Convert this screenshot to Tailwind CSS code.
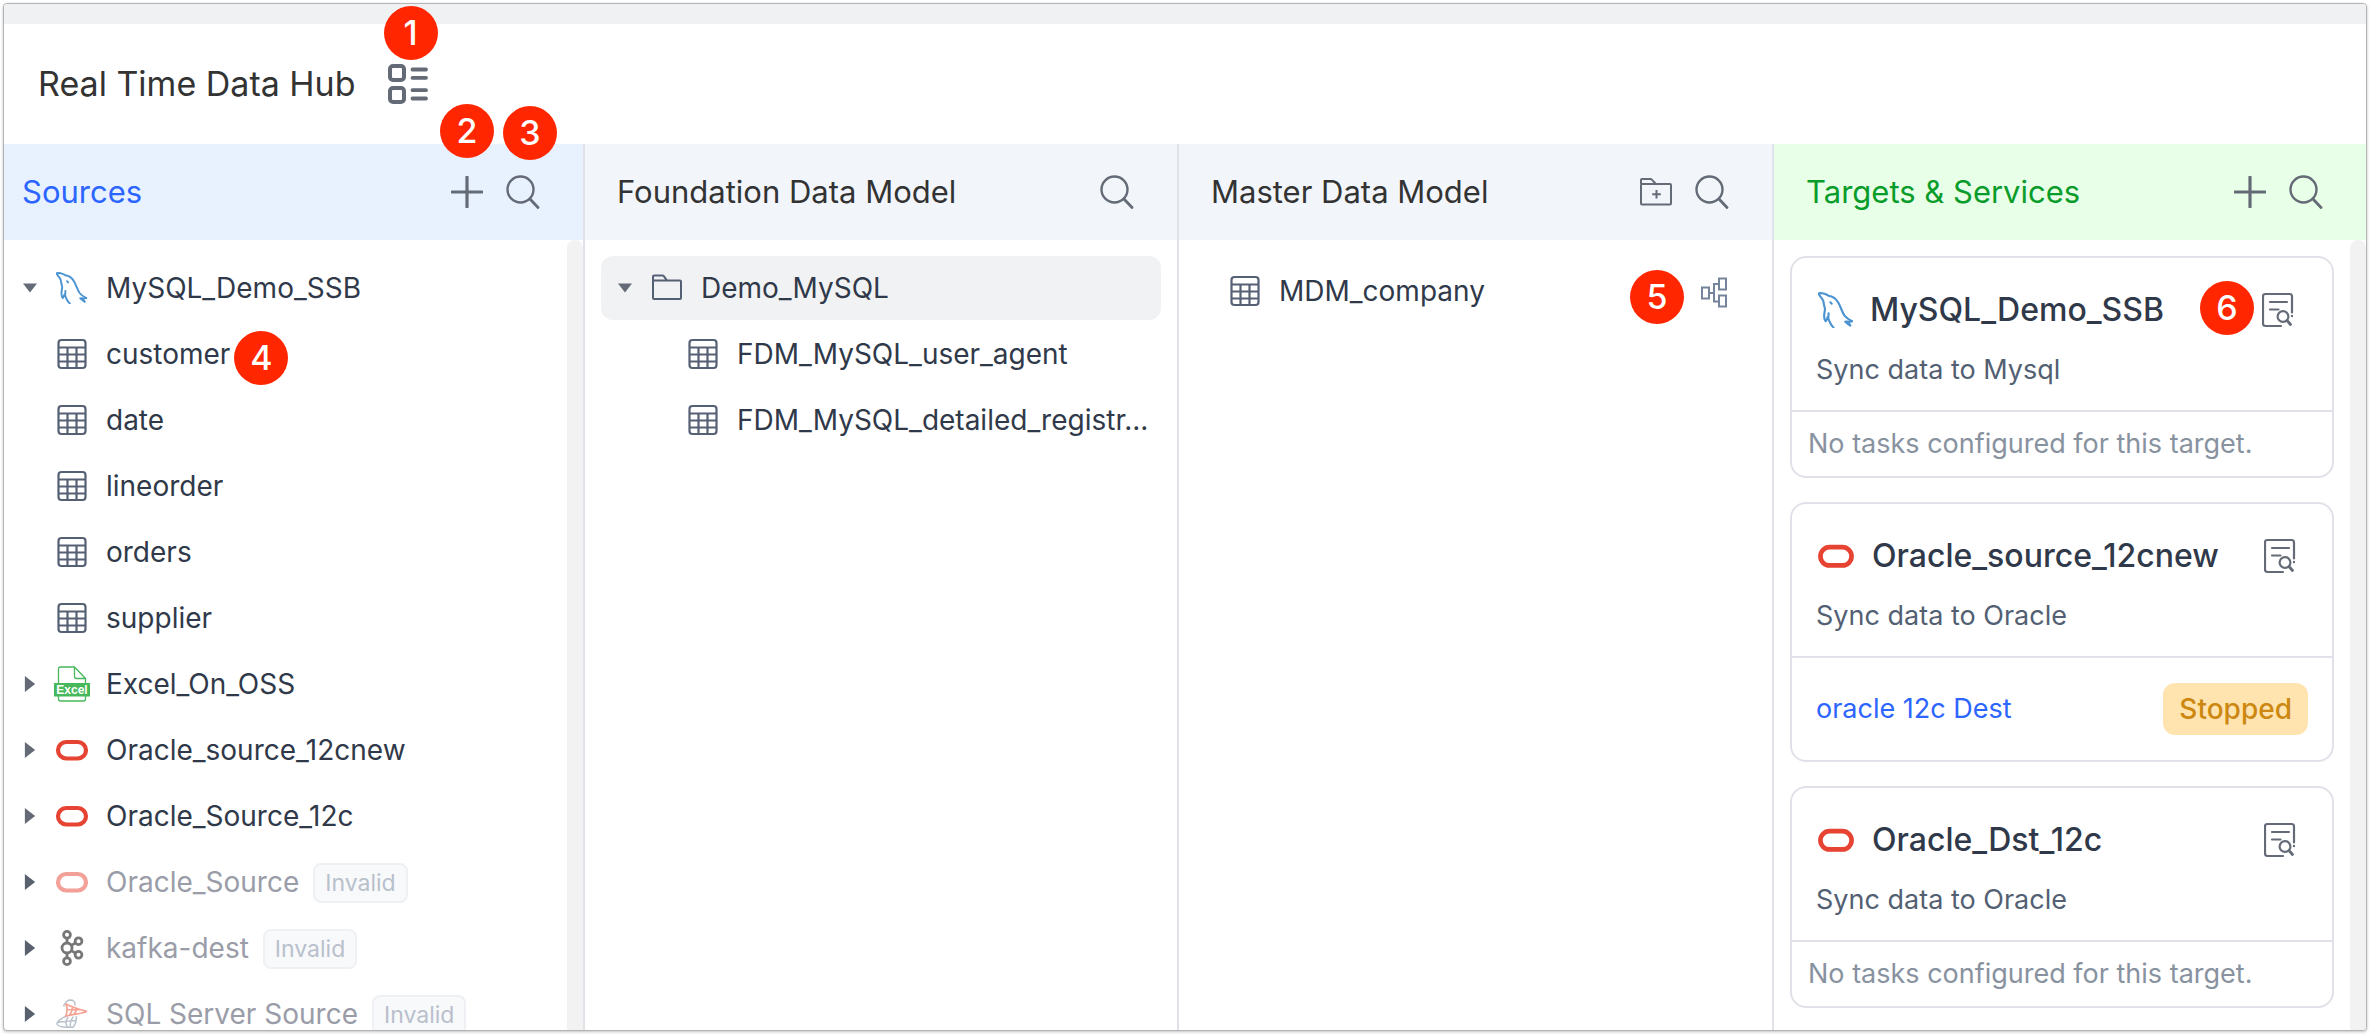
<!DOCTYPE html>
<html lang="en">
<head>
<meta charset="utf-8">
<meta name="viewport" content="width=device-width, initial-scale=1">
<title>Real Time Data Hub</title>
<script src="https://cdn.jsdelivr.net/npm/@tailwindcss/browser@4"></script>
</head>
<body class="bg-white font-['Inter','Liberation_Sans',sans-serif] text-[28px] leading-10 text-[#303949]">

<svg class="hidden" aria-hidden="true">
  <symbol id="i-plus" viewBox="0 0 32 32"><path d="M16 1v30M1 16h30" fill="none" stroke="currentColor" stroke-width="3.200" stroke-linecap="round"/></symbol>
  <symbol id="i-search" viewBox="0 0 34 34"><g fill="none" stroke="currentColor" stroke-width="2.400" stroke-linecap="round"><circle cx="14.500" cy="14.500" r="13"/><path d="M24 24l8 8.500" stroke-width="2.800"/></g></symbol>
  <symbol id="i-folder" viewBox="0 0 32 32"><path d="M2 9.500V4.500q0-1 1-1h8.500q.8 0 1.300.6L16 8.500M3 8.500h26q1 0 1 1V26q0 1-1 1H3q-1 0-1-1V9.500q0-1 1-1z" fill="none" stroke="currentColor" stroke-width="2" stroke-linejoin="round"/></symbol>
  <symbol id="i-folder-add" viewBox="0 0 34 30"><path d="M2 7V3q0-1 1-1h8.500q.8 0 1.300.6L16.500 6.500M3 7h28q1 0 1 1v18.500q0 1-1 1H3q-1 0-1-1V8q0-1 1-1zM17.500 13v8.500M13.200 17.200h8.600" fill="none" stroke="currentColor" stroke-width="2" stroke-linejoin="round"/></symbol>
  <symbol id="i-table" viewBox="0 0 32 32"><path d="M5.500 2h21q3 0 3 3v22q0 3-3 3h-21q-3 0-3-3V5q0-3 3-3zM2.500 9.500h27M2.500 16.500h27M2.500 23.500h27M11.500 9.500V30M20.500 9.500V30" fill="none" stroke="currentColor" stroke-width="2.200"/></symbol>
  <symbol id="i-down" viewBox="0 0 14 10"><path d="M0 .5h14L7 9.500z" fill="currentColor"/></symbol>
  <symbol id="i-right" viewBox="0 0 10 14"><path d="M.5 0v14L9.500 7z" fill="currentColor"/></symbol>
  <symbol id="i-mysql" viewBox="0 0 32 32"><g fill="none" stroke="#4b93d1" stroke-width="1.900" stroke-linecap="round" stroke-linejoin="round"><path d="M.9 1.900C.4.700 2 .8 5 1.300c2 .5 3 .8 4.300 2 3.500.4 7 3 8.800 6.200 2.200 3.800 3.200 8.200 5.500 11.500 1.500 1.900 3.500 3.300 6.600 5"/><path d="M.9 1.900c1 2.600 3 3.600 3.800 6 .6 2.600.5 4 1.300 6 .7 2.200-.7 4.600-.5 7.500 0 2.400.8 4.200 1.300 4.600 1-1 1.300-2.600 2-4 .8 3.400 2.200 7 5 9.500M9.200 22c.4-1.400 0-2 .2-3"/><path d="M30.200 26c-1.600.4-3.200.6-4.600.3 1.600 1.200 2.800 2.200 3.200 3.600-1.600-1-3-2.200-4.600-3.600"/><path d="M11 9.200l1.200 1.200"/></g></symbol>
  <symbol id="i-oracle" viewBox="0 0 36 36"><rect x="4" y="10" width="28" height="16.500" rx="8.200" fill="none" stroke="#e64333" stroke-width="4.200"/></symbol>
  <symbol id="i-kafka" viewBox="0 0 36 36"><g fill="none" stroke="#777" stroke-width="2.800"><circle cx="13" cy="4.800" r="3.400"/><circle cx="13" cy="18" r="5"/><circle cx="13" cy="31.200" r="3.400"/><circle cx="24.500" cy="11.200" r="3.400"/><circle cx="24.500" cy="24.800" r="3.400"/><path d="M13 8.200V13M13 23v4.800M17.300 15.400l4.200-2.500M17.300 20.600l4.200 2.500"/></g></symbol>
  <symbol id="i-sqlserver" viewBox="0 0 36 36"><g fill="none" stroke="#b9c2cc" stroke-width="1.500" stroke-linecap="round" stroke-linejoin="round"><path d="M11.500 7.500c.5-2 2.500-3.500 5-3.600 3 0 4.500 1.600 4.600 5M10 10c-.3-1 .3-2 1.500-2.500M12 20.500C7 22 3 25.500 3 28c.4 2.600 8.500 3.600 16 3.200 2.500-2.600 3.500-6 3.300-10.700M3.500 26.500c4.500-1 11-1.800 18.500-2M14 21.500c-2.500 3-2.500 6.500-.5 9.400M19 21c-2.500 3-3 7-2.500 10"/></g><g fill="none" stroke="#f7a394" stroke-width="1.700" stroke-linejoin="round"><path d="M12 8c3.500 2.200 10.500 4.600 20.500 7.400-4 2-12 2.600-20.800 4.800 1.600-3.600 2-7.600.3-12.200zM13.500 13.500c5 .2 9 .3 13 .2M18 10.500c.6 3-.5 6-2.500 8.500M22.500 12c0 2.500-1 4.500-2.500 6"/></g></symbol>
  <symbol id="i-doc" viewBox="0 0 32 36"><g fill="none" stroke="currentColor" stroke-width="2.200" stroke-linecap="round"><path d="M30 20.500V4.500Q30 2 27.500 2h-24Q1 2 1 4.500v27Q1 34 3.500 34H19M8 10h17M8 17.500h8.500M30 23.800v.4"/><circle cx="21" cy="24.500" r="5.400"/><path d="M25 28.500l3.500 4" stroke-width="2.800"/></g></symbol>
  <symbol id="i-lineage" viewBox="0 0 28 32"><path d="M2 10.500h7v11H2zM19 1.500h7v11h-7zM19 18.500h7v11h-7zM9 16h5M19 7h-5v17.500h5" fill="none" stroke="currentColor" stroke-width="2"/></symbol>
  <symbol id="i-view" viewBox="0 0 40 40"><g fill="none" stroke="currentColor" stroke-linecap="round"><rect x="2" y="2" width="14" height="14" rx="3" stroke-width="4"/><rect x="2" y="24" width="14" height="14" rx="3" stroke-width="4"/><path d="M24.500 5.500h13.500M24.500 13.800h13.500M24.500 26.200h13.500M24.500 34.500h13.500" stroke-width="3.800"/></g></symbol>
  <symbol id="i-excel" viewBox="0 0 36 36"><g fill="none" stroke="#48b85c" stroke-width="1.300" stroke-linejoin="round"><path d="M4.500 17V3q0-2 2-2h14L31.500 12.500V17M20.500 1v9.500q0 2 2 2h9M4.500 30v3q0 2 2 2h23q2 0 2-2v-3"/></g><path d="M0 17h36v13.500H0z" fill="#48b85c"/><text x="18" y="27.500" text-anchor="middle" font-family="Liberation Sans, sans-serif" font-weight="bold" font-size="12" fill="#fff">Excel</text></symbol>
</svg>

<div class="h-screen p-[3px]">
<div class="flex h-full flex-col overflow-hidden rounded-sm border border-[#b4b4b4] bg-white shadow-[0_1px_3px_rgba(0,0,0,0.25)]">
  <div class="h-5 shrink-0 bg-[#f0f1f3]"></div>
  <header class="flex h-[120px] shrink-0 items-center gap-8 pl-[34px]">
    <h1 class="text-[34px] leading-[48px] text-[#333]">Real Time Data Hub</h1>
    <button class="relative text-[#646b76]" aria-label="Switch view">
      <svg class="size-10"><use href="#i-view"/></svg>
      <span class="absolute -top-[58px] -left-1 flex size-[54px] items-center justify-center rounded-full bg-[#ff2600] text-[34px] font-medium text-white">1</span>
    </button>
  </header>

  <main class="grid min-h-0 flex-1 grid-cols-[581fr_594fr_595fr_592fr]">
    <section class="flex min-h-0 min-w-0 flex-col border-r-2 border-[#e1e2e9]">
      <div class="flex h-24 shrink-0 items-center justify-between bg-[#e8f2ff] pr-10 pl-[18px]">
        <h2 class="text-[31px] text-[#2c65ff]">Sources</h2>
        <div class="flex gap-4 text-[#646b76]">
          <button class="relative flex size-10 items-center justify-center" aria-label="Add source"><svg class="size-8"><use href="#i-plus"/></svg>
            <span class="absolute -top-[68px] -left-[7px] flex size-[54px] items-center justify-center rounded-full bg-[#ff2600] text-[34px] font-medium text-white">2</span></button>
          <button class="relative flex size-10 items-center justify-center" aria-label="Search sources"><svg class="size-[34px]"><use href="#i-search"/></svg>
            <span class="absolute -top-[66px] left-0 flex size-[54px] items-center justify-center rounded-full bg-[#ff2600] text-[34px] font-medium text-white">3</span></button>
        </div>
      </div>
      <div class="flex min-h-0 flex-1">
        <ul class="flex min-w-0 flex-1 flex-col gap-0.5 overflow-hidden pt-4">
          <li class="flex h-16 shrink-0 items-center pl-[10px]"><button class="mr-2 flex w-8 justify-center text-[#646b76]" aria-label="Collapse"><svg class="h-[10px] w-[14px]"><use href="#i-down"/></svg></button><span class="mr-4 flex size-9 items-center justify-center"><svg class="size-8"><use href="#i-mysql"/></svg></span>MySQL_Demo_SSB</li>
          <li class="flex h-16 shrink-0 items-center gap-[18px] pl-[52px]"><svg class="size-8 text-[#566074]"><use href="#i-table"/></svg><span>customer</span><span class="mt-2 -ml-[14px] flex size-[54px] items-center justify-center rounded-full bg-[#ff2600] text-[34px] font-medium text-white">4</span></li>
          <li class="flex h-16 shrink-0 items-center gap-[18px] pl-[52px]"><svg class="size-8 text-[#566074]"><use href="#i-table"/></svg>date</li>
          <li class="flex h-16 shrink-0 items-center gap-[18px] pl-[52px]"><svg class="size-8 text-[#566074]"><use href="#i-table"/></svg>lineorder</li>
          <li class="flex h-16 shrink-0 items-center gap-[18px] pl-[52px]"><svg class="size-8 text-[#566074]"><use href="#i-table"/></svg>orders</li>
          <li class="flex h-16 shrink-0 items-center gap-[18px] pl-[52px]"><svg class="size-8 text-[#566074]"><use href="#i-table"/></svg>supplier</li>
          <li class="flex h-16 shrink-0 items-center pl-[10px]"><button class="mr-2 flex w-8 justify-center text-[#646b76]" aria-label="Expand"><svg class="h-4 w-3"><use href="#i-right"/></svg></button><svg class="mr-4 size-9"><use href="#i-excel"/></svg>Excel_On_OSS</li>
          <li class="flex h-16 shrink-0 items-center pl-[10px]"><button class="mr-2 flex w-8 justify-center text-[#646b76]" aria-label="Expand"><svg class="h-4 w-3"><use href="#i-right"/></svg></button><svg class="mr-4 size-9"><use href="#i-oracle"/></svg>Oracle_source_12cnew</li>
          <li class="flex h-16 shrink-0 items-center pl-[10px]"><button class="mr-2 flex w-8 justify-center text-[#646b76]" aria-label="Expand"><svg class="h-4 w-3"><use href="#i-right"/></svg></button><svg class="mr-4 size-9"><use href="#i-oracle"/></svg>Oracle_Source_12c</li>
          <li class="flex h-16 shrink-0 items-center pl-[10px] text-[#9a9da8]"><button class="mr-2 flex w-8 justify-center text-[#59616e]" aria-label="Expand"><svg class="h-4 w-3"><use href="#i-right"/></svg></button><svg class="mr-4 size-9 opacity-50"><use href="#i-oracle"/></svg>Oracle_Source<span class="mt-0.5 ml-[14px] flex h-10 items-center rounded-lg border-2 border-[#eff0f3] bg-[#f8f9fb] px-[10px] text-[23px] text-[#b8c0cc]">Invalid</span></li>
          <li class="flex h-16 shrink-0 items-center pl-[10px] text-[#9a9da8]"><button class="mr-2 flex w-8 justify-center text-[#59616e]" aria-label="Expand"><svg class="h-4 w-3"><use href="#i-right"/></svg></button><svg class="mr-4 size-9"><use href="#i-kafka"/></svg>kafka-dest<span class="mt-0.5 ml-[14px] flex h-10 items-center rounded-lg border-2 border-[#eff0f3] bg-[#f8f9fb] px-[10px] text-[23px] text-[#b8c0cc]">Invalid</span></li>
          <li class="flex h-16 shrink-0 items-center pl-[10px] text-[#9a9da8]"><button class="mr-2 flex w-8 justify-center text-[#59616e]" aria-label="Expand"><svg class="h-4 w-3"><use href="#i-right"/></svg></button><svg class="mr-4 size-9"><use href="#i-sqlserver"/></svg>SQL Server Source<span class="mt-0.5 ml-[14px] flex h-10 items-center rounded-lg border-2 border-[#eff0f3] bg-[#f8f9fb] px-[10px] text-[23px] text-[#b8c0cc]">Invalid</span></li>
        </ul>
        <div class="w-4 rounded-t-full bg-[#f2f2f2]"></div>
      </div>
    </section>

    <section class="flex min-h-0 min-w-0 flex-col border-r-2 border-[#e1e2e9]">
      <div class="flex h-24 shrink-0 items-center justify-between bg-[#f2f6fb] pr-10 pl-8">
        <h2 class="text-[31px] text-[#333]">Foundation Data Model</h2>
        <button class="flex size-10 items-center justify-center text-[#646b76]" aria-label="Search foundation data model"><svg class="size-[34px]"><use href="#i-search"/></svg></button>
      </div>
      <ul class="flex flex-col gap-0.5 p-4">
        <li class="flex h-16 items-center rounded-xl bg-[#f1f2f4] pl-2"><button class="mr-[10px] flex w-8 justify-center text-[#646b76]" aria-label="Collapse"><svg class="h-[10px] w-[14px]"><use href="#i-down"/></svg></button><svg class="mr-[18px] size-8 text-[#566074]"><use href="#i-folder"/></svg>Demo_MySQL</li>
        <li class="flex h-16 items-center gap-[18px] pr-1 pl-[86px]"><svg class="size-8 shrink-0 text-[#566074]"><use href="#i-table"/></svg><span class="truncate">FDM_MySQL_user_agent</span></li>
        <li class="flex h-16 items-center gap-[18px] pr-1 pl-[86px]"><svg class="size-8 shrink-0 text-[#566074]"><use href="#i-table"/></svg><span class="truncate">FDM_MySQL_detailed_registr...</span></li>
      </ul>
    </section>

    <section class="flex min-h-0 min-w-0 flex-col border-r-2 border-[#e1e2e9]">
      <div class="flex h-24 shrink-0 items-center justify-between bg-[#f2f6fb] pr-10 pl-8">
        <h2 class="text-[31px] text-[#333]">Master Data Model</h2>
        <div class="flex gap-4 text-[#646b76]">
          <button class="flex size-10 items-center justify-center" aria-label="Add folder"><svg class="h-[30px] w-[34px]"><use href="#i-folder-add"/></svg></button>
          <button class="flex size-10 items-center justify-center" aria-label="Search master data model"><svg class="size-[34px]"><use href="#i-search"/></svg></button>
        </div>
      </div>
      <ul class="px-4 pt-4">
        <li class="flex h-[70px] items-center gap-4 pr-7 pl-[34px]"><svg class="size-8 text-[#566074]"><use href="#i-table"/></svg><span class="ml-0.5 min-w-0 flex-1 truncate">MDM_company</span>
          <span class="mt-3 flex size-[54px] items-center justify-center rounded-full bg-[#ff2600] text-[34px] font-medium text-white">5</span>
          <button class="mt-1 text-[#75849b]" aria-label="Show lineage"><svg class="h-8 w-7"><use href="#i-lineage"/></svg></button></li>
      </ul>
    </section>

    <section class="flex min-h-0 min-w-0 flex-col">
      <div class="flex h-24 shrink-0 items-center justify-between bg-[#e8ffe8] pr-10 pl-8">
        <h2 class="text-[31px] text-[#0a9c2a]">Targets &amp; Services</h2>
        <div class="flex gap-4 text-[#646b76]">
          <button class="flex size-10 items-center justify-center" aria-label="Add target"><svg class="size-8"><use href="#i-plus"/></svg></button>
          <button class="flex size-10 items-center justify-center" aria-label="Search targets"><svg class="size-[34px]"><use href="#i-search"/></svg></button>
        </div>
      </div>
      <div class="flex min-h-0 flex-1">
        <div class="flex min-w-0 flex-1 flex-col gap-6 overflow-hidden p-4">
          <article class="shrink-0 rounded-2xl border-2 border-[#e1e2e9]">
            <div class="border-b-2 border-[#e1e2e9] px-6 pt-8 pb-5">
              <div class="relative flex h-10 items-center gap-[14px]"><span class="flex size-10 shrink-0 items-center justify-center"><svg class="size-9"><use href="#i-mysql"/></svg></span><h3 class="min-w-0 flex-1 truncate text-[32px] font-medium">MySQL_Demo_SSB</h3>
                <button class="mr-[14px] text-[#646b76]" aria-label="View details"><svg class="h-9 w-8"><use href="#i-doc"/></svg></button>
                <span class="absolute -top-[9px] right-[54px] flex size-[54px] items-center justify-center rounded-full bg-[#ff2600] text-[34px] font-medium text-white">6</span></div>
              <p class="mt-5 text-[27px] text-[#535f73]">Sync data to Mysql</p>
            </div>
            <p class="px-4 py-3 text-[27px] text-[#88929f]">No tasks configured for this target.</p>
          </article>
          <article class="shrink-0 rounded-2xl border-2 border-[#e1e2e9]">
            <div class="border-b-2 border-[#e1e2e9] px-6 pt-8 pb-5">
              <div class="flex h-10 items-center gap-4"><svg class="size-10 shrink-0"><use href="#i-oracle"/></svg><h3 class="min-w-0 flex-1 truncate text-[32px] font-medium">Oracle_source_12cnew</h3>
                <button class="mr-3 text-[#646b76]" aria-label="View details"><svg class="h-9 w-8"><use href="#i-doc"/></svg></button></div>
              <p class="mt-5 text-[27px] text-[#535f73]">Sync data to Oracle</p>
            </div>
            <div class="flex h-[102px] items-center justify-between px-6">
              <a href="#" class="text-[27px] text-[#2c65ff]">oracle 12c Dest</a>
              <span class="flex h-[52px] items-center rounded-xl bg-[#ffe4b0] px-4 text-[28px] font-medium text-[#cc8811]">Stopped</span>
            </div>
          </article>
          <article class="shrink-0 rounded-2xl border-2 border-[#e1e2e9]">
            <div class="border-b-2 border-[#e1e2e9] px-6 pt-8 pb-5">
              <div class="flex h-10 items-center gap-4"><svg class="size-10 shrink-0"><use href="#i-oracle"/></svg><h3 class="min-w-0 flex-1 truncate text-[32px] font-medium">Oracle_Dst_12c</h3>
                <button class="mr-3 text-[#646b76]" aria-label="View details"><svg class="h-9 w-8"><use href="#i-doc"/></svg></button></div>
              <p class="mt-5 text-[27px] text-[#535f73]">Sync data to Oracle</p>
            </div>
            <p class="px-4 py-3 text-[27px] text-[#88929f]">No tasks configured for this target.</p>
          </article>
        </div>
        <div class="w-4 rounded-t-full bg-[#f2f2f2]"></div>
      </div>
    </section>
  </main>
</div>
</div>
</body>
</html>
